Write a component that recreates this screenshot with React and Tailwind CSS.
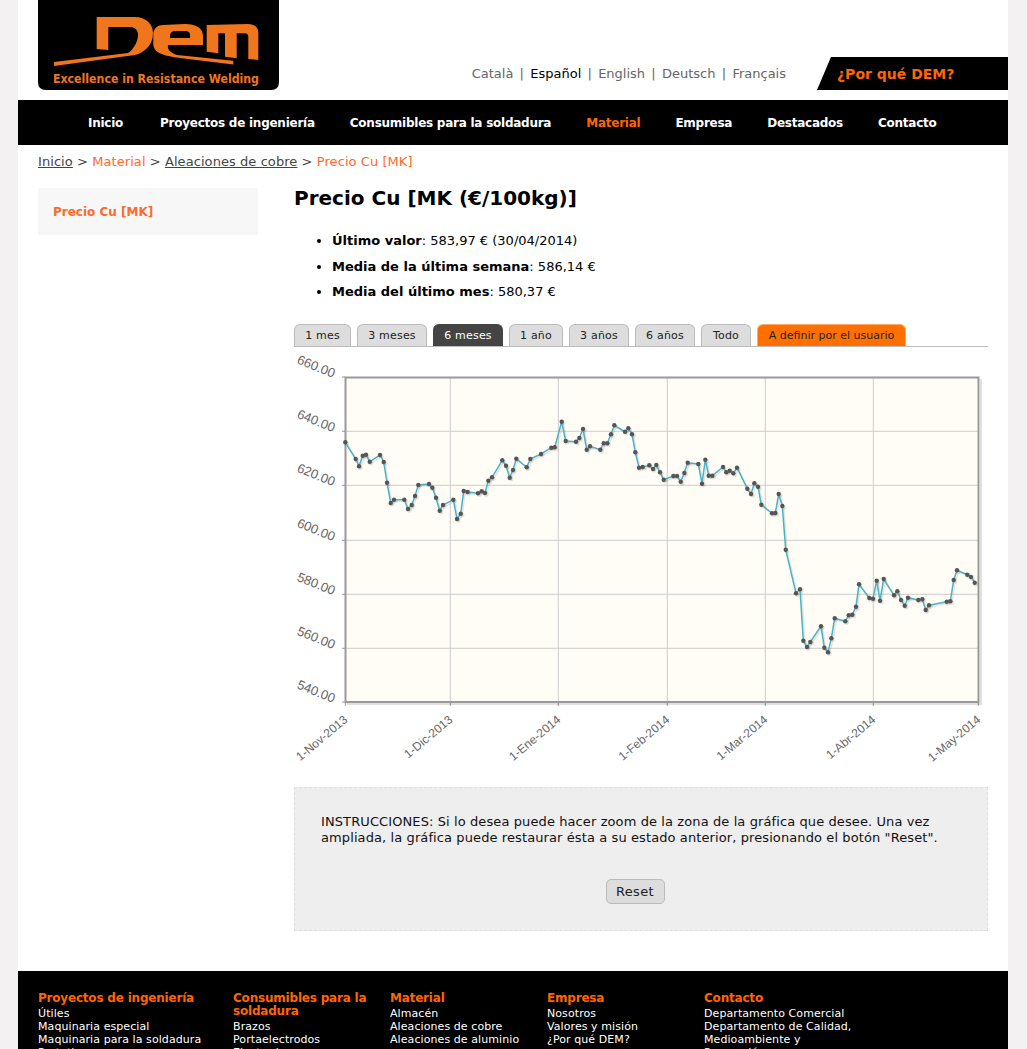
import React from "react";

const FONT = "font-['DejaVu_Sans','Liberation_Sans',sans-serif]";

const navLinks = ["Inicio", "Proyectos de ingeniería", "Consumibles para la soldadura", "Material", "Empresa", "Destacados", "Contacto"];
const languages = ["Català", "Español", "English", "Deutsch", "Français"];
const tabs = [
  { t: "1 mes", w: "w-[57px]" },
  { t: "3 meses", w: "w-[70px]" },
  { t: "6 meses", w: "w-[70px]" },
  { t: "1 año", w: "w-[54px]" },
  { t: "3 años", w: "w-[60px]" },
  { t: "6 años", w: "w-[60px]" },
  { t: "Todo", w: "w-[50px]" },
  { t: "A definir por el usuario", w: "w-[149px]" },
];

const footerCols = [
  { w: "w-[195px]", title: "Proyectos de ingeniería", items: ["Útiles", "Maquinaria especial", "Maquinaria para la soldadura", "Prototipos"] },
  { w: "w-[157px]", title: "Consumibles para la soldadura", items: ["Brazos", "Portaelectrodos", "Electrodos"] },
  { w: "w-[157px]", title: "Material", items: ["Almacén", "Aleaciones de cobre", "Aleaciones de aluminio"] },
  { w: "w-[157px]", title: "Empresa", items: ["Nosotros", "Valores y misión", "¿Por qué DEM?"] },
  { w: "w-[157px]", title: "Contacto", items: ["Departamento Comercial", "Departamento de Calidad, Medioambiente y Prevención"] },
];

// puntos leidos de la grafica, en coordenadas de pagina
const serie = [
  [345.3,442.3],[355.7,459],[359,466.3],[362.7,455.7],[366,454.7],[369.7,461.7],[380,455],[383.7,462],[387,482.7],[390.7,503],[394,499.7],[404.3,499.7],[408,509],[411.7,505],[415,496],[418.3,485],[429,484],[432.3,487.7],[436,497.7],[439.7,510.7],[443,505],[453.3,499.7],[457,519],[460.7,513.7],[463.7,491],[467.7,492],[478,493.3],[481.7,491.3],[485,493],[488.3,480.7],[492,477.3],[502.3,460.3],[506,465.7],[509.7,477.7],[513,470],[516.3,458.7],[526.7,467.3],[530.3,459],[541,454],[551.3,447.7],[554.7,447.3],[561.7,421.7],[565.7,441],[576,441.7],[579.3,438],[583,429],[586.7,449.7],[590,446.3],[600.3,449.7],[603.7,443.3],[607.3,443.3],[611,434.3],[614.3,425.3],[625,431.7],[628.3,428.3],[632,434.3],[635.3,452.3],[639,467.7],[642.7,467],
  [649.3,465.3],[653,469],[656.3,465],[660,472.3],[663.7,479.7],[673.3,476],[677,476],[680.7,481.7],[684.3,473],[687.7,462.7],[698.3,464],[702,483.7],[705.3,459.7],[708.7,475.7],[712.3,475.7],[723,467],[726.3,472.3],[729.7,470.7],[733.3,473.3],[737,467.7],[747.3,488.7],[751,494],[754.3,483.3],[758,486.7],[761.3,504.7],[772,513.3],[775.3,513],[778.7,494],[782.3,506],
  [785.7,549.7],[796,593.3],[800,589.3],[803.3,640.7],[807,647],[810.3,642],[821,626.3],[824.3,647.7],[828,652.3],[831.3,638.3],[834.7,618.3],[845.3,621.3],[848.7,615.3],[852.3,614.7],[856,606.7],[859,584.3],[869.3,598],[873,598.7],[876.7,580.7],[880,600.7],[883.7,579],[894,595.3],[897.3,591.3],[901,600],[904.7,605.7],[908,597.7],[918.3,600],[922.3,599.3],[925.7,610],[929,605.3],[946.7,601.7],[950.3,601.3],[953.7,580],[957,570.3],[967.3,574.7],[971,577],[974.7,582.7],
];

const yTicks = [[377, "660.00"], [431.3, "640.00"], [485.3, "620.00"], [540.3, "600.00"], [594.3, "580.00"], [648.3, "560.00"], [702, "540.00"]];
const xTicks = [[345.3, "1-Nov-2013"], [450.3, "1-Dic-2013"], [558.3, "1-Ene-2014"], [667.3, "1-Feb-2014"], [765.3, "1-Mar-2014"], [873.3, "1-Abr-2014"], [978.3, "1-May-2014"]];

const Logo = () => (
  <svg viewBox="0 0 241 90" className="block w-[241px] h-[90px]">
    <path d="M0 0H241V82Q241 90 233 90H8Q0 90 0 82Z" fill="#000" />
    <g fill="#f0761e">
      <path d="M58.7 49V17H97C108 17 115 24 115 33C115 44 108 52 97 55L16 66V62L90 53C95 50 100 42 100 35C100 30 97 27 92 27H70.3V50Z" />
      <path d="M115.300 35C115.300 28 120 25 125 25L147 24C158 24 165 28 165 36V45H130C129 50 133 53 139 55L195.300 60.700V64.500L144 58.300C128 56 115.300 54 115.300 44ZM132 38H152V35C152 32 150 31 147 31H137C134 31 132 33 132 35Z" />
      <path d="M168.700 25L210 24C216 24 220.300 27 220.300 33V60L210.300 59V37C210.300 34.500 209 33.300 207 33.300H198.700V58.300L187 56.700V33.300H180.300V53.300L168.700 51.700Z" />
    </g>
    <text x="15" y="82.500" textLength="206" lengthAdjust="spacingAndGlyphs" fill="#f0761e" fontSize="11.500" fontWeight="700" fontFamily="'DejaVu Sans', sans-serif">Excellence in Resistance Welding</text>
  </svg>
);

const Chart = () => {
  const linea = serie.map((p) => p.join(",")).join(" ");
  return (
    <svg viewBox="294 347 694 430" className="block w-[694px] h-[430px]">
      <rect x="345" y="377" width="634" height="325" fill="#fffdf6" />
      {yTicks.slice(1, -1).map(([y]) => (
        <line key={y} x1="345" x2="978" y1={y} y2={y} stroke="#cccccc" strokeWidth="1" />
      ))}
      {xTicks.slice(1, -1).map(([x]) => (
        <line key={x} x1={x} x2={x} y1="377" y2="702" stroke="#cccccc" strokeWidth="1" />
      ))}
      {yTicks.map(([y, t]) => (
        <g key={t}>
          <line x1="342" x2="345" y1={y} y2={y} stroke="#999999" />
          <text transform={`translate(333 ${y + 1}) rotate(22)`} textAnchor="end" fontSize="13" fill="#666666" fontFamily="'Liberation Sans', sans-serif">{t}</text>
        </g>
      ))}
      {xTicks.map(([x, t]) => (
        <g key={t}>
          <line x1={x} x2={x} y1="702" y2="706" stroke="#999999" />
          <text transform={`translate(${x + 3} 721) rotate(-40)`} textAnchor="end" fontSize="12" fill="#666666" fontFamily="'Liberation Sans', sans-serif">{t}</text>
        </g>
      ))}
      <path d="M981 379V704H347" fill="none" stroke="#000" strokeOpacity="0.12" strokeWidth="2" />
      <rect x="345.500" y="377.500" width="633" height="324.500" fill="none" stroke="#999999" strokeWidth="2" />
      <polyline points={linea} fill="none" stroke="#000" strokeOpacity="0.1" strokeWidth="1.500" transform="translate(1.500 1.500)" />
      {serie.map(([x, y], i) => (
        <circle key={i} cx={x + 1.2} cy={y + 1.2} r="2.500" fill="#000" fillOpacity="0.1" />
      ))}
      <polyline points={linea} fill="none" stroke="#4bb2c5" strokeWidth="1.500" />
      {serie.map(([x, y], i) => (
        <circle key={i} cx={x} cy={y} r="2.200" fill="#555555" />
      ))}
    </svg>
  );
};

export default function App() {
  return (
    <div className={`h-[1049px] overflow-hidden bg-[#f3f1f2] ${FONT}`}>
      <div className="ml-[18px] w-[990px] h-[1049px] bg-white">
        <header className="h-[100px] pl-5 flex items-start">
          <Logo />
          <div className="ml-auto h-[90px] flex items-end">
            <div className="flex items-center gap-[6.25px] mb-2 mr-[31px] text-[13px] leading-4 text-[#666666]">
              {languages.map((l, i) => (
                <React.Fragment key={l}>
                  {i > 0 && <span>|</span>}
                  <span className={l === "Español" ? "text-black" : ""}>{l}</span>
                </React.Fragment>
              ))}
            </div>
            <div className="w-[191px] h-[33px] bg-black [clip-path:polygon(14px_0,100%_0,100%_100%,0_100%)] pl-5 flex items-center text-sm font-bold text-[#ff6600]">
              ¿Por qué DEM?
            </div>
          </div>
        </header>

        <nav className="h-[45px] bg-black flex items-center pl-[70px] gap-[35px] text-xs font-bold tracking-[-0.25px] text-white whitespace-nowrap">
          {navLinks.map((n) => (
            <span key={n} className={n === "Material" ? "text-[#ff6600]" : n === "Inicio" ? "w-[37px]" : ""}>{n}</span>
          ))}
        </nav>

        <div className="pl-5 pt-[9px] h-[43px] text-[13px] leading-4 tracking-[0.07px] text-[#444444]">
          <span className="underline">Inicio</span> &gt; <span className="text-[#ff6a2a]">Material</span> &gt;{" "}
          <span className="underline">Aleaciones de cobre</span> &gt; <span className="text-[#ff6a2a]">Precio Cu [MK]</span>
        </div>

        <div className="flex pl-5">
          <aside className="w-[220px] h-[47px] bg-[#f7f7f7] pl-[15px] flex items-center text-xs font-bold text-[#ff6a2a]">
            Precio Cu [MK]
          </aside>
          <main className="ml-9 w-[694px]">
            <h1 className="text-xl leading-5 font-bold text-black">Precio Cu [MK (€/100kg)]</h1>
            <ul className="list-disc pl-[38px] mt-[25px] text-[13px] leading-4 text-black space-y-[9.5px]">
              <li><b>Último valor</b>: 583,97 € (30/04/2014)</li>
              <li><b>Media de la última semana</b>: 586,14 €</li>
              <li><b>Media del último mes</b>: 580,37 €</li>
            </ul>
            <div className="mt-6 h-[23px] flex gap-[6px] border-b border-[#bbbbbb]">
              {tabs.map(({ t, w }) => (
                <div
                  key={t}
                  className={`${w} h-[22px] pt-px flex items-center justify-center rounded-t-md border border-b-0 text-[11px] ${
                    t === "6 meses"
                      ? "bg-[#444444] border-[#444444] text-white tracking-[0.2px]"
                      : t.startsWith("A definir")
                      ? "bg-[#ff7000] border-[#ffaa66] text-[#222222]"
                      : "bg-[#dddddd] border-[#bbbbbb] text-[#222222] tracking-[0.2px]"
                  }`}
                >
                  {t}
                </div>
              ))}
            </div>
            <Chart />
            <div className="mt-[10px] h-[144px] bg-[#eeeeee] border border-dashed border-[#dddddd] px-[26px] pt-[26px] text-[13px] leading-4 tracking-[0.1px] text-[#111111]">
              <p>INSTRUCCIONES: Si lo desea puede hacer zoom de la zona de la gráfica que desee. Una vez ampliada, la gráfica puede restaurar ésta a su estado anterior, presionando el botón "Reset".</p>
              <div className="mt-[33px] flex justify-center pr-3">
                <button className="w-[59px] h-[25px] rounded-[5px] border border-[#bbbbbb] bg-[#dddddd] text-[13px] tracking-[0.3px] text-[#222222]">Reset</button>
              </div>
            </div>
          </main>
        </div>

        <footer className="mt-10 bg-black h-[160px] pl-5 pt-5 flex text-[11px] leading-[13px] tracking-[0.08px] text-white">
          {footerCols.map((c) => (
            <div key={c.title} className={c.w}>
              <h3 className="pt-px mb-[2px] text-xs leading-[13px] font-bold tracking-[-0.2px] text-[#ff6600] pr-3">{c.title}</h3>
              <ul>
                {c.items.map((i) => (
                  <li key={i}>{i}</li>
                ))}
              </ul>
            </div>
          ))}
        </footer>
      </div>
    </div>
  );
}
